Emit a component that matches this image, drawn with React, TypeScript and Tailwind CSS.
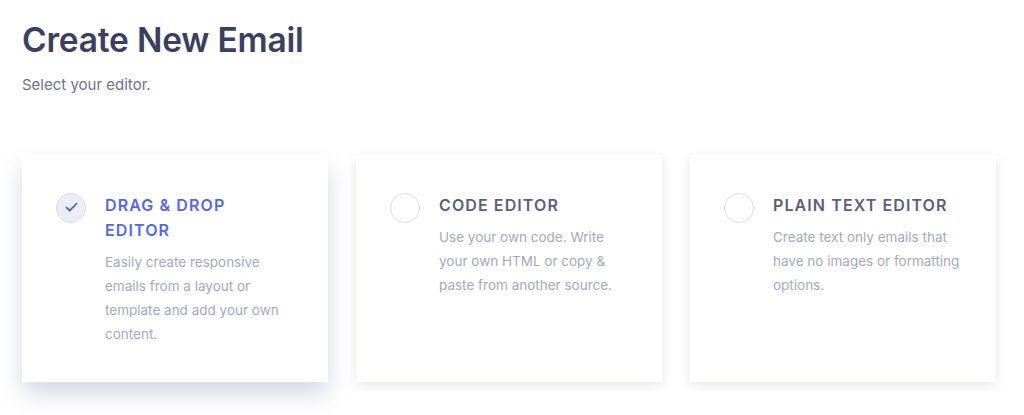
import { Check } from 'lucide-react'

type Editor = {
  id: string
  title: string[]
  body: string
  selected?: boolean
}

const editors: Editor[] = [
  {
    id: 'dnd',
    title: ['DRAG & DROP', 'EDITOR'],
    body: 'Easily create responsive emails from a layout or template and add your own content.',
    selected: true,
  },
  {
    id: 'code',
    title: ['CODE EDITOR'],
    body: 'Use your own code. Write your own HTML or copy & paste from another source.',
  },
  {
    id: 'plain',
    title: ['PLAIN TEXT EDITOR'],
    body: 'Create text only emails that have no images or formatting options.',
  },
]

function EditorCard({ editor }: { editor: Editor }) {
  return (
    <div
      className={`flex h-[227px] w-[306px] gap-[19px] bg-white pl-[34px] pr-[30px] pt-[38px] ${
        editor.selected
          ? 'shadow-[0_12px_22px_rgba(70,80,130,0.22)]'
          : 'shadow-[0_3px_10px_rgba(70,80,130,0.14)]'
      }`}
    >
      {/* Radio */}
      <div
        className={`flex h-[30px] w-[30px] shrink-0 items-center justify-center rounded-full border ${
          editor.selected ? 'border-[#d9dbe8] bg-[#eceef6]' : 'border-[#d9dbe6] bg-white'
        }`}
      >
        {editor.selected && <Check className="h-[15px] w-[15px] text-[#4a5bd8]" strokeWidth={2.8} />}
      </div>

      <div className="w-[196px]">
        <h3
          className={`text-[16px] font-semibold leading-[25px] tracking-[1.1px] ${
            editor.selected ? 'text-[#5468e6]' : 'text-[#5b5f7c]'
          }`}
        >
          {editor.title.map((line) => (
            <span key={line} className="block">
              {line}
            </span>
          ))}
        </h3>
        <p className="mt-[7px] text-[13.5px] leading-[24px] text-[#a5a8c0]">{editor.body}</p>
      </div>
    </div>
  )
}

export default function App() {
  return (
    <div className="min-h-screen bg-white px-[22px] pt-[20px] font-['Inter',sans-serif]">
      <h1 className="text-[33.5px] font-semibold leading-[40px] tracking-[-0.2px] text-[#3b4060]">
        Create New Email
      </h1>
      <p className="mt-[14px] text-[15px] text-[#6d7192]">Select your editor.</p>

      <div className="mt-[58px] flex gap-[28px]">
        {editors.map((editor) => (
          <EditorCard key={editor.id} editor={editor} />
        ))}
      </div>
    </div>
  )
}
